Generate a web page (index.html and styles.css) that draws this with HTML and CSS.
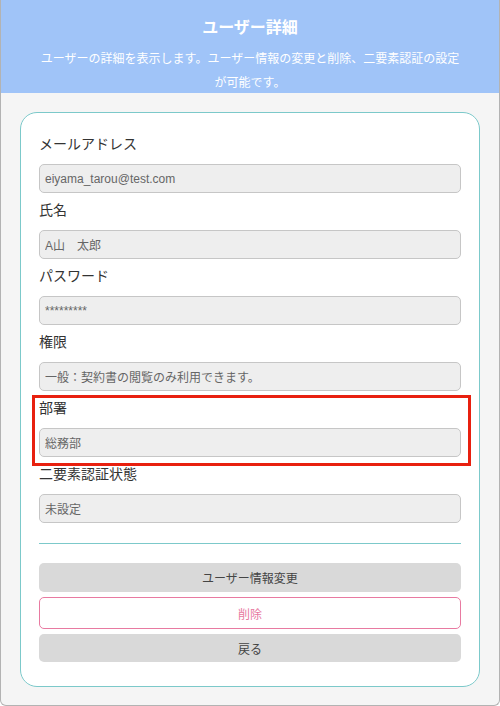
FILE: index.html
```
<!DOCTYPE html>
<html lang="ja">
<head>
    <meta charset="UTF-8">
    <meta name="viewport" content="width=device-width, initial-scale=1.0">
    <title>ユーザー詳細</title>
    <link rel="stylesheet" href="styles.css">
</head>
<body>
    <div class="frame">
        <div class="header">
            <h1 class="title">ユーザー詳細</h1>
            <p class="lead">ユーザーの詳細を表示します。ユーザー情報の変更と削除、二要素認証の設定が可能です。</p>
        </div>
        <div class="card">
            <div class="field">
                <label>メールアドレス</label>
                <input type="text" value="eiyama_tarou@test.com" readonly>
            </div>
            <div class="field">
                <label>氏名</label>
                <input type="text" value="A山　太郎" readonly>
            </div>
            <div class="field">
                <label>パスワード</label>
                <input type="text" value="*********" readonly>
            </div>
            <div class="field">
                <label>権限</label>
                <input type="text" value="一般：契約書の閲覧のみ利用できます。" readonly>
            </div>
            <div class="field mark">
                <label>部署</label>
                <input type="text" value="総務部" readonly>
            </div>
            <div class="field">
                <label>二要素認証状態</label>
                <input type="text" value="未設定" readonly>
            </div>
            <hr class="line">
            <div class="btns">
                <button class="btn">ユーザー情報変更</button>
                <button class="btn btn-del">削除</button>
                <button class="btn btn-back">戻る</button>
            </div>
        </div>
    </div>
</body>
</html>
```
FILE: styles.css
```
*{
    margin:0;
    padding:0;
    box-sizing:border-box;
}
body{
    font-family:"Liberation Sans","Noto Sans CJK JP",sans-serif;
    color:#333;
    background-color:#fff;
}
.frame{
    height:706px;
    border:1px solid #b3b3b3;
    border-top:none;
    border-radius:0 0 6px 6px;
    background-color:#f5f5f5;
    overflow:hidden;
}
.header{
    height:93px;
    background-color:#a0c4f8;
    color:#fff;
    text-align:center;
    padding:17px 34px 0;
}
.title{
    font-size:16px;
    line-height:22px;
    font-weight:bold;
}
.lead{
    font-size:12px;
    line-height:24px;
    margin-top:8px;
}
.card{
    margin:19px 19px 0;
    background-color:#fff;
    border:1px solid #7cc9ca;
    border-radius:17px;
    padding:21px 18px 24px;
}
.field{
    margin-bottom:7px;
}
.field label{
    display:block;
    font-size:14px;
    line-height:20px;
    margin-bottom:10px;
    color:#333;
}
.field input{
    display:block;
    width:100%;
    height:29px;
    border:1px solid #c6c6c6;
    border-radius:5px;
    background-color:#eee;
    padding:0 5px;
    font-family:inherit;
    font-size:12px;
    color:#666;
    outline:none;
}
/* 注目枠 */
.mark{
    position:relative;
}
.mark::after{
    content:"";
    position:absolute;
    top:-3px;
    left:-7px;
    right:-10px;
    bottom:-9px;
    border:3px solid #e8200f;
}
.line{
    border:none;
    border-top:1px solid #7cc9ca;
    margin:20px 0 19px;
}
.btns{
    display:flex;
    flex-direction:column;
    gap:5px;
}
.btn{
    height:29px;
    border:none;
    border-radius:5px;
    background-color:#d9d9d9;
    font-family:inherit;
    font-size:12px;
    color:#444;
    cursor:pointer;
}
.btn-del{
    height:32px;
    background-color:#fff;
    border:1px solid #e87aa1;
    color:#e8799f;
}
.btn-back{
    height:28px;
}
```
